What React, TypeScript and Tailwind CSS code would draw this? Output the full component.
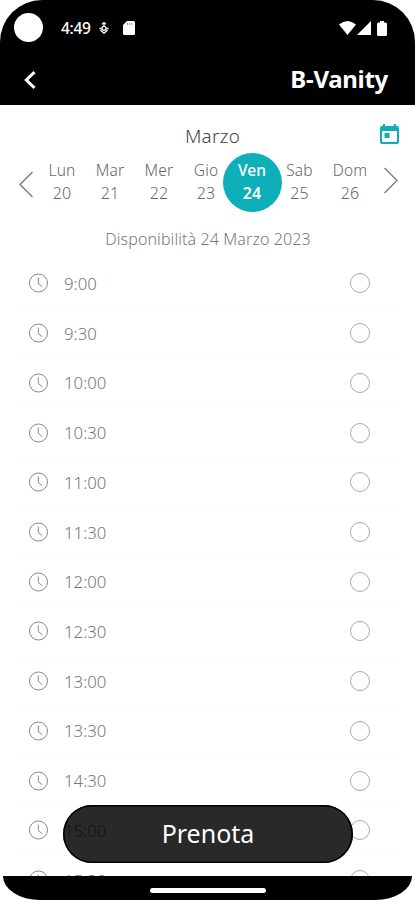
import type { ReactNode } from 'react';

const days = [
  { name: 'Lun', date: 20, width: 'w-12' },
  { name: 'Mar', date: 21, width: 'w-12' },
  { name: 'Mer', date: 22, width: 'w-[50px]' },
  { name: 'Gio', date: 23, width: 'w-11' },
  { name: 'Ven', date: 24, width: 'w-12', selected: true },
  { name: 'Sab', date: 25, width: 'w-[47px]' },
  { name: 'Dom', date: 26, width: 'w-[54px]' },
];

const slots = [
  '9:00', '9:30', '10:00', '10:30', '11:00', '11:30', '12:00',
  '12:30', '13:00', '13:30', '14:30', '15:00', '15:30',
];

function StatusBar() {
  return (
    <div className="flex h-14 items-center pl-[14px] pr-[28px] text-white">
      <span className="mb-[2px] size-[29px] rounded-full bg-white" />
      <span className="ml-[18px] w-[37px] pt-px text-[15.5px] font-medium leading-none tracking-[-0.3px]">4:49</span>
      <svg className="size-3" viewBox="0 0 12 12" fill="none" stroke="currentColor" strokeWidth="1.3">
        <path d="M6 0v5M4 2.2 6 .6l2 1.6M1.5 6.5h2.2M8.3 6.5h2.2M2.5 8 6 11.3 9.5 8" />
        <circle cx="6" cy="6.3" r="2" />
      </svg>
      <svg className="ml-[13px] h-[14px] w-3" viewBox="0 0 12 14">
        <path d="M4 0h6.5Q12 0 12 1.5v11q0 1.5-1.5 1.5h-9Q0 14 0 12.5V4z" fill="currentColor" />
        <path d="M4.5 2.2v1.4M6.7 2.2v1.4M8.9 2.2v1.4" stroke="#000" strokeWidth=".6" />
      </svg>
      <svg className="ml-auto h-[14px] w-[17px]" viewBox="0 0 17 14">
        <path d="M0 3.6Q8.5-3.5 17 3.6L8.5 14z" fill="currentColor" />
      </svg>
      <svg className="ml-px h-[14px] w-[14px]" viewBox="0 0 14 14">
        <path d="M14 0v14H0z" fill="currentColor" />
      </svg>
      <svg className="ml-[6px] h-[15px] w-[10px]" viewBox="0 0 10 15">
        <path d="M3 0h4v1.5h1.5Q10 1.5 10 3v10.5q0 1.5-1.5 1.5h-7Q0 15 0 13.5V3q0-1.5 1.5-1.5H3z" fill="currentColor" />
      </svg>
    </div>
  );
}

function Header() {
  return (
    <header className="h-[105px] shrink-0 rounded-t-[42px] bg-black">
      <StatusBar />
      <div className="flex h-[48px] items-center justify-between pl-[24px] pr-[27px] text-white">
        <svg className="h-[18px] w-3" viewBox="0 0 12 18" fill="none" stroke="currentColor" strokeWidth="3">
          <path d="M10.5 1.2 2.3 9l8.2 7.8" />
        </svg>
        <h1 className="pb-[2px] text-2xl font-bold leading-none tracking-[-0.3px]">B-Vanity</h1>
      </div>
    </header>
  );
}

function Arrow({ children }: { children: ReactNode }) {
  return (
    <svg className="h-[27px] w-[15px]" viewBox="0 0 15 27" fill="none" stroke="#777" strokeWidth="1.3">
      {children}
    </svg>
  );
}

function WeekPicker() {
  return (
    <div className="flex h-[60px] shrink-0 items-start pl-[19px]">
      <div className="mt-[18px] w-[19px]">
        <Arrow><path d="M13.5 1 1 13.5 13.5 26" /></Arrow>
      </div>
      {days.map((day) => (
        <div
          key={day.date}
          className={`relative flex shrink-0 flex-col items-center pt-[6px] leading-[23px] ${day.width} ${
            day.selected ? 'font-semibold text-white' : 'font-light text-[#666]'
          }`}
        >
          {day.selected && (
            <span className="absolute left-[-5px] top-0 size-[59px] rounded-full bg-[#0eafb9]" />
          )}
          <span className={`relative text-[15.5px] ${day.selected ? 'font-medium' : 'tracking-[0.2px]'}`}>{day.name}</span>
          <span className="relative text-base leading-[22px]">{day.date}</span>
        </div>
      ))}
      <div className="ml-[6px] mt-[14px]">
        <Arrow><path d="M1.5 1 14 13.5 1.5 26" /></Arrow>
      </div>
    </div>
  );
}

function ClockIcon() {
  return (
    <svg className="size-5" viewBox="0 0 20 20" fill="none" stroke="#888">
      <circle cx="10.5" cy="10" r="9" />
      <path d="M10.3 4.5v6l4 3.3" />
    </svg>
  );
}

export default function App() {
  return (
    <div className="relative flex h-[900px] w-[415px] flex-col overflow-hidden bg-white font-['Noto_Sans',sans-serif]">
      <Header />
      <main className="flex min-h-0 flex-1 flex-col overflow-hidden">
        <div className="grid h-[48px] shrink-0 grid-cols-[1fr_auto_1fr] pr-[16px] pt-[18px]">
          <h2 className="col-start-2 ml-[26px] text-[18.8px] font-light leading-[26px] tracking-[0.3px] text-[#444]">Marzo</h2>
          <svg className="ml-auto mt-px h-5 w-[19px]" viewBox="0 0 19 20">
            <path
              fill="#0eafb9"
              fillRule="evenodd"
              d="M3 0h2v2h9V0h2v2h1q2 0 2 2v14q0 2-2 2H2q-2 0-2-2V4q0-2 2-2h1zM2 7v11h15V7zm2.5 2h5v5h-5z"
            />
          </svg>
        </div>
        <WeekPicker />
        <p className="mt-[14px] h-[32px] shrink-0 pl-px text-center text-base font-light leading-6 tracking-[0.1px] text-[#777]">
          Disponibilità 24 Marzo 2023
        </p>
        <ul className="shrink-0">
          {slots.map((slot) => (
            <li key={slot} className="ml-[15px] mr-[15px] flex h-[49.73px] items-center border-b border-[#fafafa] pl-[13px] pr-[30px]">
              <ClockIcon />
              <span className="ml-4 pt-[2px] text-[16.8px] font-light leading-none text-[#777]">{slot}</span>
              <span className="ml-auto size-5 rounded-full border border-[#aaa]" />
            </li>
          ))}
        </ul>
      </main>
      <button className="absolute left-[63px] top-[805px] h-[58px] w-[290px] rounded-full bg-black/84 text-[25px] text-white ring-[1.5px] ring-inset ring-black">
        Prenota
      </button>
      <footer className="mx-[3px] flex h-6 shrink-0 justify-center bg-black pt-[12px] [border-bottom-left-radius:37px_24px] [border-bottom-right-radius:37px_24px]">
        <span className="h-[5px] w-[116px] rounded-full bg-white" />
      </footer>
    </div>
  );
}
